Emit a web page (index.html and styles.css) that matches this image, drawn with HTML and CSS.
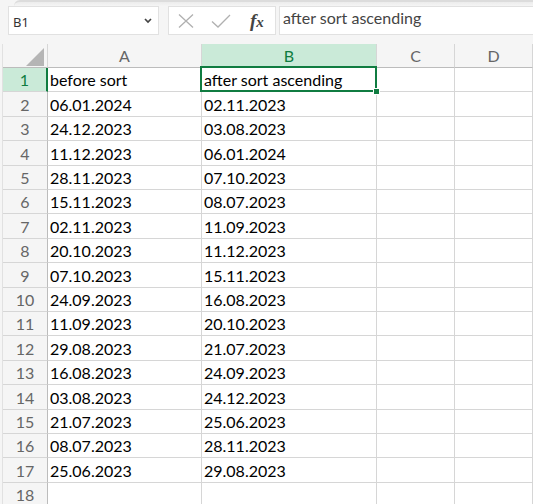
FILE: index.html
```html
<!DOCTYPE html>
<html lang="en">
<head>
    <meta charset="UTF-8" />
    <meta name="viewport" content="width=device-width, initial-scale=1.0" />
    <title>Sort dates</title>
    <link rel="stylesheet" href="styles.css">
</head>
<body>
    <div class="ribbon-edge"></div>
    <div class="formula-bar">
        <div class="name-box">
            <input type="text" class="name-input" value="B1" aria-label="Name box">
            <button type="button" class="name-toggle" aria-label="Open name list">
                <svg width="8" height="6" viewBox="0 0 8 6"><path d="M1 1l3 3 3-3" fill="none" stroke="#444" stroke-width="1.7"/></svg>
            </button>
        </div>
        <div class="actions">
            <button type="button" aria-label="Cancel">
                <svg width="16" height="16" viewBox="0 0 16 16"><path d="M1 1.5l14 13M15 1.5l-14 13" fill="none" stroke="#b0b0b0" stroke-width="1.3"/></svg>
            </button>
            <button type="button" aria-label="Enter">
                <svg width="20" height="16" viewBox="0 0 20 16"><path d="M1 8.5l6 5.5L19 2" fill="none" stroke="#b0b0b0" stroke-width="1.3"/></svg>
            </button>
            <button type="button" class="fx" aria-label="Insert function"><i>f</i><i class="fx-x">x</i></button>
        </div>
        <input type="text" class="formula-input" value="after sort ascending" aria-label="Formula">
    </div>
    <table class="sheet">
        <colgroup>
            <col class="col-head"><col class="col-a"><col class="col-b"><col class="col-c"><col class="col-c"><col>
        </colgroup>
        <thead>
            <tr>
                <th class="corner"><svg width="18" height="18" viewBox="0 0 18 18"><path d="M18 0v18H0z" fill="#b5b5b5"/></svg></th>
                <th>A</th>
                <th class="active">B</th>
                <th>C</th>
                <th>D</th>
                <th></th>
            </tr>
        </thead>
        <tbody>
            <tr><th class="active">1</th><td>before sort</td><td class="selected">after sort ascending<span class="handle"></span></td><td></td><td></td><td></td></tr>
            <tr><th>2</th><td>06.01.2024</td><td>02.11.2023</td><td></td><td></td><td></td></tr>
            <tr><th>3</th><td>24.12.2023</td><td>03.08.2023</td><td></td><td></td><td></td></tr>
            <tr><th>4</th><td>11.12.2023</td><td>06.01.2024</td><td></td><td></td><td></td></tr>
            <tr><th>5</th><td>28.11.2023</td><td>07.10.2023</td><td></td><td></td><td></td></tr>
            <tr><th>6</th><td>15.11.2023</td><td>08.07.2023</td><td></td><td></td><td></td></tr>
            <tr><th>7</th><td>02.11.2023</td><td>11.09.2023</td><td></td><td></td><td></td></tr>
            <tr><th>8</th><td>20.10.2023</td><td>11.12.2023</td><td></td><td></td><td></td></tr>
            <tr><th>9</th><td>07.10.2023</td><td>15.11.2023</td><td></td><td></td><td></td></tr>
            <tr><th>10</th><td>24.09.2023</td><td>16.08.2023</td><td></td><td></td><td></td></tr>
            <tr><th>11</th><td>11.09.2023</td><td>20.10.2023</td><td></td><td></td><td></td></tr>
            <tr><th>12</th><td>29.08.2023</td><td>21.07.2023</td><td></td><td></td><td></td></tr>
            <tr><th>13</th><td>16.08.2023</td><td>24.09.2023</td><td></td><td></td><td></td></tr>
            <tr><th>14</th><td>03.08.2023</td><td>24.12.2023</td><td></td><td></td><td></td></tr>
            <tr><th>15</th><td>21.07.2023</td><td>25.06.2023</td><td></td><td></td><td></td></tr>
            <tr><th>16</th><td>08.07.2023</td><td>28.11.2023</td><td></td><td></td><td></td></tr>
            <tr><th>17</th><td>25.06.2023</td><td>29.08.2023</td><td></td><td></td><td></td></tr>
            <tr><th>18</th><td></td><td></td><td></td><td></td><td></td></tr>
        </tbody>
    </table>
</body>
</html>
```

FILE: styles.css
```css
* {
    box-sizing: border-box;
}

body {
    margin: 0;
    background-color: #f5f5f5;
    font-family: Lato, "Liberation Sans", sans-serif;
    font-size: 16px;
    color: #000;
    overflow: hidden;
}

button, input {
    border: none;
    padding: 0;
    background: none;
    font-family: inherit;
    outline: none;
}

.ribbon-edge {
    height: 6px;
    margin-left: 14px;
    border-top: 2px solid #dcdcdc;
    border-top-left-radius: 6px;
    background: linear-gradient(#ececec, #f5f5f5);
}

.formula-bar {
    display: flex;
    height: 29px;
    padding-left: 8px;
}

.name-box, .actions, .formula-input {
    background-color: #fff;
    border: 1px solid #e1e1e1;
}

.name-box {
    display: flex;
    width: 151px;
    margin-right: 9px;
}

.name-input {
    flex: 1;
    min-width: 0;
    padding: 2px 0 0 4px;
    font-family: "Noto Sans", sans-serif;
    font-size: 13px;
    color: #333;
}

.name-toggle {
    display: flex;
    align-items: center;
    justify-content: center;
    width: 20px;
}

.actions {
    display: flex;
    align-items: center;
    width: 108px;
    margin-right: 3px;
    padding-left: 9px;
    gap: 17px;
}

.actions button {
    display: flex;
    align-items: center;
}

.actions .fx {
    padding-left: 2px;
    font-family: "Liberation Serif", serif;
    font-size: 19px;
    font-weight: bold;
    line-height: 20px;
    color: #444;
}

.fx-x {
    padding-top: 2px;
    font-size: 15px;
}

.formula-input {
    flex: 1;
    min-width: 0;
    padding: 0 0 7px 3px;
    border-right: none;
    font-size: 16px;
    color: #444;
}

.sheet {
    width: calc(100% - 2px);
    margin: 9px 0 0 2px;
    table-layout: fixed;
    border-spacing: 0;
    border-left: 1px solid #e1e1e1;
}

.col-head {
    width: 45px;
}

.col-a {
    width: 154px;
}

.col-b {
    width: 175px;
}

.col-c {
    width: 78px;
}

.sheet th, .sheet td {
    height: 24px;
    padding: 0;
    border-right: 1px solid #d6d6d6;
    border-bottom: 1px solid #d6d6d6;
    line-height: 22px;
    white-space: nowrap;
}

.sheet th {
    font-weight: normal;
    text-align: center;
    color: #666;
    background-color: #f5f5f5;
}

.sheet td {
    padding: 1px 0 0 2px;
    background-color: #fff;
}

.sheet thead th {
    padding-top: 1px;
    border-bottom-color: #bcbcbc;
}

.sheet tbody th {
    padding-top: 1px;
    border-right-color: #bcbcbc;
}

/* a row is a bit taller than 24px, so spread the extra over the sheet */
.sheet tbody tr:nth-child(5n+2) > *,
.sheet tbody tr:nth-child(5n+4) > * {
    height: 25px;
    line-height: 21px;
}

.sheet .corner {
    padding: 2px 3px 0 0;
    text-align: right;
}

.corner svg {
    display: block;
    margin-left: auto;
}

.sheet th.active {
    color: #107c41;
    background-color: #caead8;
}

.sheet tbody th.active {
    border-right: 2px solid #107c41;
}

.sheet .selected {
    position: relative;
}

.selected::after {
    content: "";
    position: absolute;
    inset: -2px -1px -1px -2px;
    border: 2px solid #107c41;
}

.handle {
    position: absolute;
    z-index: 1;
    right: -4px;
    bottom: -4px;
    width: 7px;
    height: 7px;
    border: 1px solid #fff;
    background-color: #107c41;
}
```
